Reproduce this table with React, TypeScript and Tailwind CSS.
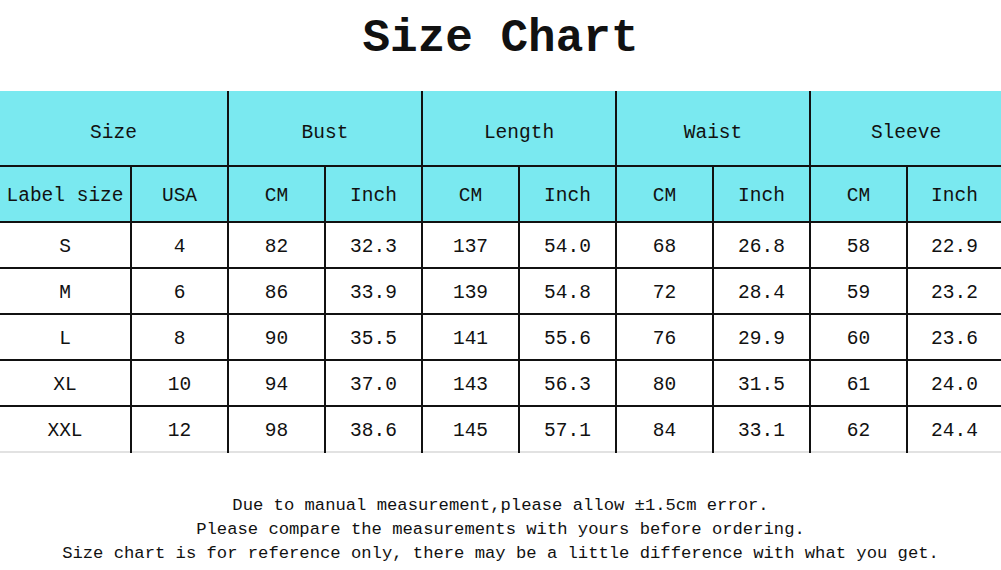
const rows = [
  ["S", "4", "82", "32.3", "137", "54.0", "68", "26.8", "58", "22.9"],
  ["M", "6", "86", "33.9", "139", "54.8", "72", "28.4", "59", "23.2"],
  ["L", "8", "90", "35.5", "141", "55.6", "76", "29.9", "60", "23.6"],
  ["XL", "10", "94", "37.0", "143", "56.3", "80", "31.5", "61", "24.0"],
  ["XXL", "12", "98", "38.6", "145", "57.1", "84", "33.1", "62", "24.4"],
];

const widths = [131, 97, 97, 97, 97, 97, 97, 97, 97, 94];
const groups = ["Size", "Bust", "Length", "Waist", "Sleeve"];
const subs = ["Label size", "USA", "CM", "Inch", "CM", "Inch", "CM", "Inch", "CM", "Inch"];

const mono = { fontFamily: '"Liberation Mono", "DejaVu Sans Mono", monospace' };

export default function App() {
  return (
    <div className="h-[570px] w-[1001px] overflow-hidden bg-white text-[#111]" style={mono}>
      <h1 className="pt-[9px] text-center text-[46px] font-bold leading-[60px]">Size Chart</h1>

      <table className="mt-[22px] w-[1001px] table-fixed border-collapse text-center text-[19.5px]">
        <colgroup>
          {widths.map((w, i) => (
            <col key={i} style={{ width: w }} />
          ))}
        </colgroup>
        <thead className="bg-[#7ae9f0]">
          <tr className="h-[75px]">
            {groups.map((g, i) => (
              <th
                key={g}
                colSpan={2}
                className={`pt-[12px] font-normal ${i > 0 ? "border-l-2 border-[#111]" : ""}`}
              >
                {g}
              </th>
            ))}
          </tr>
          <tr className="h-[56px] border-t-2 border-[#111]">
            {subs.map((s, i) => (
              <th key={i} className={`pt-[6px] font-normal ${i > 0 ? "border-l-2 border-[#111]" : ""}`}>
                {s}
              </th>
            ))}
          </tr>
        </thead>
        <tbody>
          {rows.map((r, ri) => (
            <tr
              key={ri}
              className={`h-[46px] border-t-2 border-[#111] ${ri === rows.length - 1 ? "border-b-2 border-b-[#e2e2e2]" : ""}`}
            >
              {r.map((c, i) => (
                <td key={i} className={`pt-[6px] ${i > 0 ? "border-l-2 border-[#111]" : ""}`}>
                  {c}
                </td>
              ))}
            </tr>
          ))}
        </tbody>
      </table>

      <div className="mt-[41px] text-center text-[17.2px] leading-[24px]">
        <p>Due to manual measurement,please allow ±1.5cm error.</p>
        <p>Please compare the measurements with yours before ordering.</p>
        <p>Size chart is for reference only, there may be a little difference with what you get.</p>
      </div>
    </div>
  );
}
